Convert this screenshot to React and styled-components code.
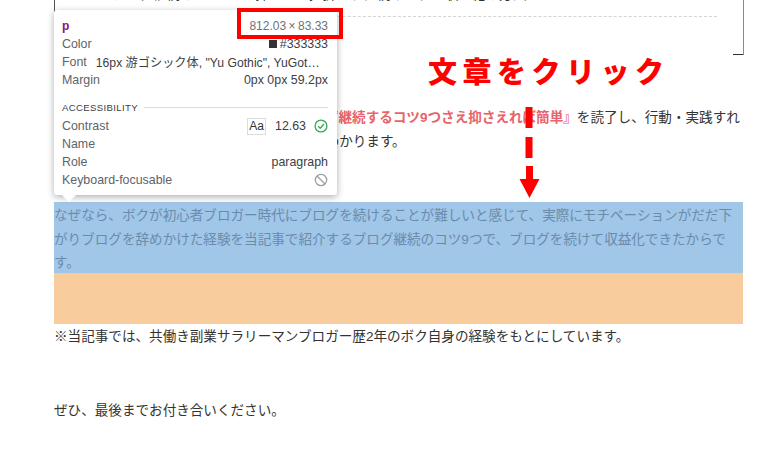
import React from "react";
import styled, { createGlobalStyle } from "styled-components";

const Global = createGlobalStyle`
  html, body { margin: 0; padding: 0; background: #fff; }
  #root { width: 768px; height: 462px; overflow: hidden; }
`;

const Page = styled.main`
  position: relative;
  width: 768px;
  height: 462px;
  overflow: hidden;
  box-sizing: border-box;
  padding-left: 54px;
  font-family: "Liberation Sans", "Noto Sans CJK JP", sans-serif;
`;

const Article = styled.article`
  width: 689px;
  font-family: "Liberation Sans", "Noto Sans CJK JP", sans-serif;
  font-size: 13.58px;
  line-height: 23.57px;
  color: #333;
`;

const TocBox = styled.div`
  position: relative;
  box-sizing: border-box;
  height: 55px;
  margin: 0 -1px 50px 0;
  padding: 0 26px 0 57px;
  border-left: 1px solid #555;
  border-right: 1px solid #8a8a8a;
  overflow: hidden;
  &::after {
    content: "";
    position: absolute;
    right: 0;
    bottom: 0;
    width: 10px;
    height: 1px;
    background: #333;
  }
`;

const TocLine = styled.div`
  margin-top: -17px;
  height: 34px;
  white-space: nowrap;
  border-bottom: 1px dashed #d4d4d4;
  box-sizing: border-box;
`;

const Para = styled.p`
  margin: 0 0 ${(p) => p.$gap || 51}px;
  padding-top: ${(p) => p.$top || 0}px;
  white-space: pre;
`;

const Strong = styled.strong`
  color: #e8636a;
`;

const Selected = styled.div`
  background: #f9cc9d;
  padding-bottom: 51px;
`;

const SelectedText = styled.p`
  box-sizing: border-box;
  margin: 0;
  height: 71px;
  padding-top: 2px;
  background: #a0c6e8;
  color: #6a8cac;
  white-space: pre;
`;

const Tooltip = styled.aside`
  position: absolute;
  left: 54px;
  top: 10px;
  box-sizing: border-box;
  width: 283px;
  height: 185px;
  padding: 6px 9px 0 8px;
  background: #fff;
  border-radius: 3px;
  box-shadow: 0 2px 7px rgba(0, 0, 0, 0.32);
  font-size: 12.4px;
  color: #5f6368;
  &::after {
    content: "";
    position: absolute;
    left: 10px;
    bottom: -5px;
    width: 10px;
    height: 10px;
    background: #fff;
    transform: rotate(45deg);
  }
`;

const Row = styled.div`
  display: flex;
  justify-content: space-between;
  align-items: center;
  height: ${(p) => p.$h || 18}px;
  white-space: nowrap;
`;

const Tag = styled.span`
  color: #881280;
  font-weight: 700;
  font-size: 12px;
`;

const Size = styled.span`
  color: #6e7276;
  font-size: 12px;
`;

const Value = styled.span`
  color: #3c4043;
  display: inline-flex;
  align-items: center;
`;

const FontValue = styled.span`
  color: #3c4043;
  margin-left: 9px;
  flex: 1;
  font-size: 12.2px;
`;

const Swatch = styled.i`
  display: inline-block;
  width: 8px;
  height: 8px;
  margin-right: 3px;
  background: #333;
`;

const SectionHead = styled.div`
  display: flex;
  align-items: center;
  gap: 6px;
  margin: 9px 0 1px;
  height: 18px;
  font-size: 9.6px;
  letter-spacing: 0.35px;
  color: #3c4043;
  &::after {
    content: "";
    flex: 1;
    height: 1px;
    background: #dadce0;
  }
`;

const Aa = styled.span`
  box-sizing: border-box;
  height: 17px;
  width: 19px;
  margin-right: 9px;
  border: 1px solid #dcdcdc;
  color: #333;
  font-size: 12px;
  line-height: 15px;
  text-align: center;
`;

const Icon = styled.svg`
  width: 14px;
  height: 14px;
  margin-left: 8px;
  fill: none;
  stroke: ${(p) => p.$c};
  stroke-width: 1.3;
`;

const RedFrame = styled.div`
  position: absolute;
  left: 237px;
  top: 8px;
  width: 106px;
  height: 31px;
  box-sizing: border-box;
  border: 4px solid #f00;
`;

const Callout = styled.div`
  position: absolute;
  left: 428px;
  top: 50px;
  font-family: "Noto Sans CJK JP", sans-serif;
  font-size: 29px;
  line-height: 40px;
  font-weight: 900;
  letter-spacing: 5.5px;
  color: #f00;
  white-space: nowrap;
`;

const Arrow = styled.svg`
  position: absolute;
  left: 519px;
  top: 107px;
  width: 21px;
  height: 92px;
`;

export default function App() {
  return (
    <Page>
      <Global />
      <Article>
        <TocBox>
          <TocLine>ブログ継続のコツ9つを押さえて挫折せずに続けられる収益化の方法</TocLine>
        </TocBox>
        <Para $gap={49} $top={1}>
          当記事『ブログ初心者がもうブログを挫折せず<Strong>継続するコツ9つさえ抑さえれば簡単』</Strong>を読了し、行動・実践すれ
          {"\n"}ば、ブログを挫折せず続ける具体的な方法がわかります。
        </Para>
        <Selected>
          <SelectedText>
            なぜなら、ボクが初心者ブロガー時代にブログを続けることが難しいと感じて、実際にモチベーションがだだ下
            {"\n"}がりブログを辞めかけた経験を当記事で紹介するブログ継続のコツ9つで、ブログを続けて収益化できたからで
            {"\n"}す。
          </SelectedText>
        </Selected>
        <Para $gap={50} $top={1}>※当記事では、共働き副業サラリーマンブロガー歴2年のボク自身の経験をもとにしています。</Para>
        <Para>ぜひ、最後までお付き合いください。</Para>
      </Article>

      <Tooltip>
        <Row $h={19}>
          <Tag>p</Tag>
          <Size>812.03{"\u2009"}×{"\u2009"}83.33</Size>
        </Row>
        <Row>
          <span>Color</span>
          <Value>
            <Swatch />#333333
          </Value>
        </Row>
        <Row>
          <span>Font</span>
          <FontValue>16px 游ゴシック体, "Yu Gothic", YuGot…</FontValue>
        </Row>
        <Row>
          <span>Margin</span>
          <Value>0px 0px 59.2px</Value>
        </Row>
        <SectionHead>ACCESSIBILITY</SectionHead>
        <Row>
          <span>Contrast</span>
          <Value>
            <Aa>Aa</Aa>12.63
            <Icon $c="#34a853" viewBox="0 0 14 14">
              <circle cx="7" cy="7" r="5.9" />
              <path d="M4.200 7.200 6.200 9.200 9.900 5" />
            </Icon>
          </Value>
        </Row>
        <Row>
          <span>Name</span>
        </Row>
        <Row>
          <span>Role</span>
          <Value>paragraph</Value>
        </Row>
        <Row>
          <span>Keyboard-focusable</span>
          <Value>
            <Icon $c="#9aa0a6" viewBox="0 0 14 14">
              <circle cx="7" cy="7" r="5.700" />
              <path d="M3 3 11 11" />
            </Icon>
          </Value>
        </Row>
      </Tooltip>

      <RedFrame />
      <Callout>文章をクリック</Callout>
      <Arrow viewBox="0 0 21 92">
        <path
          fill="#f00"
          d="M6.500 0h7v21h-7zM6.500 30h7v21h-7zM7 59h7v13h6.500L10.500 91 .5 72H7z"
        />
      </Arrow>
    </Page>
  );
}
